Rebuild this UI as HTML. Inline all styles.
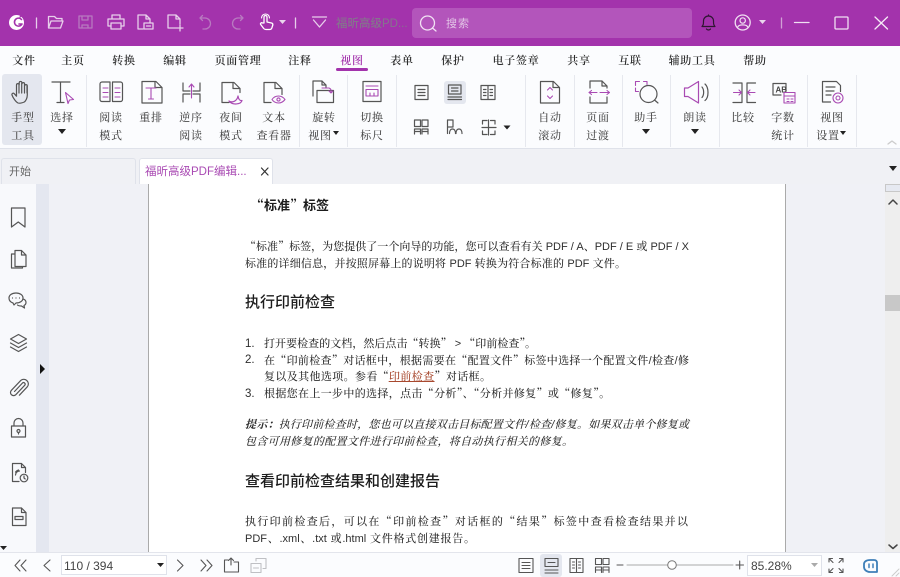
<!DOCTYPE html>
<html lang="zh"><head><meta charset="utf-8"><title>福昕高级PDF编辑器</title>
<style>
html,body{margin:0;padding:0;width:900px;height:577px;overflow:hidden;background:#fbfcfe}
body{position:relative;font-family:"Liberation Sans","Noto Sans CJK SC",sans-serif}
div{position:absolute}
.m,.r{font-family:"Liberation Serif","Noto Serif CJK SC",serif;white-space:nowrap;text-align:center;width:80px;margin-left:-40px;line-height:16px}
.m{top:53px;font-size:11px;letter-spacing:.7px;color:#2c2c2c;font-weight:600}
.r{font-size:11px;letter-spacing:.7px;color:#4a4a4a;font-weight:500}
.d{left:245px;font-family:"Liberation Sans","Noto Serif CJK SC",serif;font-size:11px;line-height:16px;color:#2e2e2e;white-space:nowrap;text-align:justify;text-align-last:justify;font-weight:500}
.d span.q,.h span.q{font-family:"Noto Serif CJK SC",serif}
.h{left:245px;font-family:"Liberation Sans","Noto Sans CJK SC",sans-serif;font-weight:500;font-size:15px;line-height:20px;color:#1c1c1c;white-space:nowrap}
.n{left:245px;font-size:11.5px;line-height:16px;color:#2e2e2e}
.i{font-style:italic}
svg{position:absolute;left:0;top:0}
</style></head><body>
<div style="left:0;top:0;width:900px;height:46px;background:#a333ac"></div>
<div style="left:412px;top:8px;width:280px;height:30px;background:#b355bb;border-radius:4px"></div>
<div style="left:336px;top:16px;font-size:11.5px;line-height:16px;color:#85748d;white-space:nowrap;font-weight:500">福昕高级PD...</div>
<div style="left:446px;top:16px;font-size:11px;line-height:16px;color:#e2c4e6;white-space:nowrap;letter-spacing:1px">搜索</div>

<div style="left:0;top:148px;width:900px;height:36px;background:#f0f1f5;border-top:1px solid #dfe2ea;box-sizing:border-box"></div>
<div style="left:2px;top:74px;width:40px;height:71px;background:#e4e7ef;border-radius:3px"></div>
<div style="left:444px;top:81px;width:22px;height:23px;background:#e4e7ef;border-radius:3px"></div>
<div style="left:336px;top:68px;width:32px;height:3px;background:#a333ac;border-radius:2px"></div>
<div style="left:86px;top:75px;width:1px;height:72px;background:#e6e8ee"></div>
<div style="left:299px;top:75px;width:1px;height:72px;background:#e6e8ee"></div>
<div style="left:347px;top:75px;width:1px;height:72px;background:#e6e8ee"></div>
<div style="left:396px;top:75px;width:1px;height:72px;background:#e6e8ee"></div>
<div style="left:525px;top:75px;width:1px;height:72px;background:#e6e8ee"></div>
<div style="left:574px;top:75px;width:1px;height:72px;background:#e6e8ee"></div>
<div style="left:622px;top:75px;width:1px;height:72px;background:#e6e8ee"></div>
<div style="left:670px;top:75px;width:1px;height:72px;background:#e6e8ee"></div>
<div style="left:719px;top:75px;width:1px;height:72px;background:#e6e8ee"></div>
<div style="left:807px;top:75px;width:1px;height:72px;background:#e6e8ee"></div>
<div style="left:856px;top:75px;width:1px;height:72px;background:#e6e8ee"></div>

<div class="m" style="left:24px">文件</div><div class="m" style="left:73px">主页</div><div class="m" style="left:124px">转换</div><div class="m" style="left:175px">编辑</div><div class="m" style="left:238px">页面管理</div><div class="m" style="left:300px">注释</div><div class="m" style="left:352px;color:#a333ac">视图</div><div class="m" style="left:402px">表单</div><div class="m" style="left:453px">保护</div><div class="m" style="left:516px">电子签章</div><div class="m" style="left:579px">共享</div><div class="m" style="left:630px">互联</div><div class="m" style="left:692px">辅助工具</div><div class="m" style="left:755px">帮助</div>

<div class="r" style="left:23px;top:110px">手型</div><div class="r" style="left:23px;top:128px">工具</div>
<div class="r" style="left:62px;top:110px">选择</div>
<div class="r" style="left:111px;top:110px">阅读</div><div class="r" style="left:111px;top:128px">模式</div>
<div class="r" style="left:151px;top:110px">重排</div>
<div class="r" style="left:191px;top:110px">逆序</div><div class="r" style="left:191px;top:128px">阅读</div>
<div class="r" style="left:231px;top:110px">夜间</div><div class="r" style="left:231px;top:128px">模式</div>
<div class="r" style="left:274px;top:110px">文本</div><div class="r" style="left:274px;top:128px">查看器</div>
<div class="r" style="left:324px;top:110px">旋转</div><div class="r" style="left:320px;top:128px">视图</div>
<div class="r" style="left:372px;top:110px">切换</div><div class="r" style="left:372px;top:128px">标尺</div>
<div class="r" style="left:550px;top:110px">自动</div><div class="r" style="left:550px;top:128px">滚动</div>
<div class="r" style="left:598px;top:110px">页面</div><div class="r" style="left:598px;top:128px">过渡</div>
<div class="r" style="left:646px;top:110px">助手</div>
<div class="r" style="left:695px;top:110px">朗读</div>
<div class="r" style="left:743px;top:110px">比较</div>
<div class="r" style="left:783px;top:110px">字数</div><div class="r" style="left:783px;top:128px">统计</div>
<div class="r" style="left:832px;top:110px">视图</div><div class="r" style="left:828px;top:128px">设置</div>

<!-- tabs -->
<div style="left:1px;top:158px;width:135px;height:26px;background:#f0f1f5;border:1px solid #dfe2ea;border-bottom:0;box-sizing:border-box;border-radius:3px 3px 0 0"></div>
<div style="left:139px;top:158px;width:134px;height:27px;background:#fff;border:1px solid #dfe2ea;border-bottom:0;box-sizing:border-box;border-radius:3px 3px 0 0"></div>
<div style="left:9px;top:164px;font-size:11px;line-height:16px;color:#666;white-space:nowrap">开始</div>
<div style="left:145px;top:164px;font-size:11.5px;line-height:16px;color:#a94ab3;white-space:nowrap">福昕高级PDF编辑...</div>

<!-- main area -->
<div style="left:0;top:184px;width:36px;height:368px;background:#f8f9fc"></div>
<div style="left:36px;top:184px;width:13px;height:368px;background:#e4e7f0"></div>
<div style="left:49px;top:184px;width:836px;height:368px;background:#f0f1f6"></div>
<div style="left:148px;top:184px;width:638px;height:368px;background:#fff;border-left:1px solid #aaa;border-right:1px solid #aaa;box-sizing:border-box"></div>
<div style="left:885px;top:184px;width:15px;height:368px;background:#eeeeee"></div>
<div style="left:885px;top:184px;width:15px;height:8px;background:#e6e9f1;border:1px solid #c8c8c8;border-right:0;box-sizing:border-box"></div>
<div style="left:885px;top:295px;width:15px;height:16px;background:#c8c8c8"></div>

<!-- document -->
<div class="h" style="left:251px;top:195px;font-size:13px;font-weight:700"><span class="q">“</span>标准<span class="q">”</span>标签</div>
<div class="d" style="top:238px;width:444px"><span class="q">“</span>标准<span class="q">”</span>标签，为您提供了一个向导的功能，您可以查看有关 PDF / A、PDF / E 或 PDF / X</div>
<div class="d" style="top:256px;width:381px">标准的详细信息，并按照屏幕上的说明将 PDF 转换为符合标准的 PDF 文件。</div>
<div class="h" style="top:293px">执行印前检查</div>
<div class="n" style="top:336px">1.</div><div class="d" style="left:264px;top:335px;width:272px">打开要检查的文档，然后点击<span class="q">“</span>转换<span class="q">”</span> &gt; <span class="q">“</span>印前检查<span class="q">”</span>。</div>
<div class="n" style="top:352px">2.</div><div class="d" style="left:264px;top:352px;width:425px">在<span class="q">“</span>印前检查<span class="q">”</span>对话框中，根据需要在<span class="q">“</span>配置文件<span class="q">”</span>标签中选择一个配置文件/检查/修</div>
<div class="d" style="left:264px;top:368px;width:227px">复以及其他选项。参看<span class="q">“</span><span style="color:#a8492f;text-decoration:underline">印前检查</span><span class="q">”</span>对话框。</div>
<div class="n" style="top:386px">3.</div><div class="d" style="left:264px;top:385px;width:346px">根据您在上一步中的选择，点击<span class="q">“</span>分析<span class="q">”</span>、<span class="q">“</span>分析并修复<span class="q">”</span>或<span class="q">“</span>修复<span class="q">”</span>。</div>
<div class="d i" style="top:417px;width:444px"><b>提示：</b>执行印前检查时，您也可以直接双击目标配置文件/检查/修复。如果双击单个修复或</div>
<div class="d i" style="top:434px;width:328px">包含可用修复的配置文件进行印前检查，将自动执行相关的修复。</div>
<div class="h" style="top:472px">查看印前检查结果和创建报告</div>
<div class="d" style="top:513px;width:443px">执行印前检查后，可以在<span class="q">“</span>印前检查<span class="q">”</span>对话框的<span class="q">“</span>结果<span class="q">”</span>标签中查看检查结果并以</div>
<div class="d" style="top:531px;width:230px">PDF、.xml、.txt 或.html 文件格式创建报告。</div>

<!-- bottom -->
<div style="left:0;top:552px;width:900px;height:25px;background:#fbfcfe;border-top:1px solid #e3e5ec;box-sizing:border-box"></div>
<div style="left:61px;top:555px;width:106px;height:20px;background:#fff;border:1px solid #dfe2ea;box-sizing:border-box"></div>
<div style="left:64px;top:557.500px;font-size:12px;line-height:16px;color:#444;white-space:nowrap">110 / 394</div>
<div style="left:540px;top:554px;width:22px;height:23px;background:#e4e7ef;border-radius:3px"></div>
<div style="left:747px;top:555px;width:75px;height:21px;background:#fff;border:1px solid #dfe2ea;box-sizing:border-box"></div>
<div style="left:751px;top:557.500px;font-size:12px;line-height:16px;color:#444;white-space:nowrap">85.28%</div>

<svg width="900" height="577" viewBox="0 0 900 577" fill="none" stroke-linecap="round" stroke-linejoin="round">
<!-- title bar -->
<circle cx="16.500" cy="22.500" r="7.500" fill="#fff"/><path d="M21.500 19.500a4 4 0 1 0 .5 4.500h-3" stroke="#a333ac" stroke-width="1.600"/><path d="M24 14l-4 3" stroke="#a333ac" stroke-width="1.200"/>
<g stroke="#e7cfea" stroke-width="1.300">
<path d="M36.500 18v10"/><path d="M48.500 28V16.500h6l2 2h5.500V21M48.500 28l2.500-7h12l-2.500 7z"/>
<path d="M112 19v-4h8v4M111 26h-3v-7h16v7h-3M111 23h10v6h-10z"/>
<path d="M143 29h-5V15h8l4 4v4M146 15v4h4M144 23h9v6h-9zM146.500 26h4"/>
<path d="M178 28h-10V15h8l4 4v5M176 15v4h4M180 25v6M177 28h6"/>
<path d="M312.500 17h14M313.500 20l6 7 6-7"/>
<path d="M295.500 18v10"/>
</g>
<g stroke="#b87ac0" stroke-width="1.300">
<rect x="79" y="16" width="13" height="12"/><path d="M82 16v4h6v-4M82 28v-3h6v3"/>
<path d="M203 29h2a5.500 5.500 0 0 0 0-11h-5M200 18l2.500-2.500M200 18l2.500 2.500"/>
<path d="M240 29h-2a5.500 5.500 0 0 1 0-11h5M243 18l-2.500-2.500M243 18l-2.500 2.500"/>
</g>
<path d="M264 23v-6a1.500 1.500 0 0 1 3 0v5l4.500 1c1 .3 1.500 1 1.300 2l-.8 2.500a2.500 2.500 0 0 1-2.500 2h-3.500a3 3 0 0 1-2.300-1l-3-4c-.7-1 .6-2.300 1.700-1.500z" stroke="#fff" stroke-width="1.300"/><path d="M261.500 18a4 4 0 0 1 8 0" stroke="#fff" stroke-width="1.100"/>
<path d="M279 20h7l-3.500 4zM759 20h7l-3.500 4z" fill="#ead5ed"/>
<circle cx="427.500" cy="23" r="7" stroke="#f2e3f4" stroke-width="1.300"/><path d="M432.500 28l3.500 3" stroke="#f2e3f4" stroke-width="1.300"/>
<path d="M702 26.500c1.500-1.500 1.500-3 1.500-5.500a5 5 0 0 1 10 0c0 2.500 0 4 1.500 5.500zM706.500 29a2.500 2.500 0 0 0 4 0M708.500 15v1" stroke="#2e1531" stroke-width="1.200"/>
<circle cx="742.700" cy="22.500" r="7.500" stroke="#f0e0f2" stroke-width="1.300"/><circle cx="742.700" cy="20.500" r="2.700" stroke="#f0e0f2" stroke-width="1.200"/><path d="M737.500 27.500c1-3.500 9.500-3.500 10.500 0" stroke="#f0e0f2" stroke-width="1.200"/>
<path d="M781.500 18v10" stroke="#d0a0d5" stroke-width="1.300"/><path d="M794.500 22.500h14.500" stroke="#f0e0f2" stroke-width="1.300"/>
<rect x="835" y="17" width="13" height="12" rx="1" stroke="#f0e0f2" stroke-width="1.300"/>
<path d="M875 17l12.500 12M887.500 17l-12.500 12" stroke="#f6ecf7" stroke-width="1.300"/>

<!-- ribbon gray -->
<g stroke="#555" stroke-width="1.200">
<path d="M18 103c-2-1-5-5-6-8-.5-1.500 1.300-2.500 2.300-1.300l2.200 2.500V85a1.300 1.300 0 0 1 2.700 0v-2.200a1.300 1.300 0 0 1 2.700 0V84a1.300 1.300 0 0 1 2.700 0v2a1.300 1.300 0 0 1 2.700 0v9c0 3-1.500 6-3 7-2 1-5 1.500-6.300 1zM19 85v8M21.700 83v10M24.500 84v9M27 86v7"/>
<path d="M52 82h18M60.500 82v20.500M57 102.500h7"/>
<path d="M100 84a2 2 0 0 1 2-2h8v19.500h-8a2 2 0 0 1-2-2zM122.500 84a2 2 0 0 0-2-2h-8v19.500h8a2 2 0 0 0 2-2z"/>
<path d="M142 81.500h14l6 6v15.500h-20zM155 81.500v6h7"/>
<path d="M183 83v8h7M200 83v8h-7M183 102v-8h7M200 102v-8h-7"/>
<path d="M222 102.500v-20h12l6 6v4M233 82.500v6h7M222 102.500h7"/>
<path d="M264 102.500v-20h12l6 6v6M275 82.500v6h7M264 102.500h7"/>
<path d="M313 96v-15h9l4 4v3M322 81v4h4M317 90.500h16.500v12H317z"/>
<rect x="363" y="81.500" width="18" height="20"/>
<path d="M415 85.500h13v14h-13zM418 89.500h7M418 92.500h7M418 95.500h7"/>
<path d="M448.500 85h12.500v9h-12.500zM451.500 88h6.500M451.500 91h6.500M448 97h13.500M448 99.500h13.500"/>
<path d="M481 85.500h14v14h-14zM488 85.500v14M483.500 89.500h2.500M483.500 92.500h2.500M483.500 95.500h2.500M490 89.500h2.500M490 92.500h2.500M490 95.500h2.500"/>
<path d="M414.500 120h6v6.500h-6zM422 120h6v6.500h-6zM414.500 129h6v5M422 129h6v5M414.500 129v5M422 129v5M414.500 131.500h6M422 131.500h6"/>
<path d="M447.500 133.500V120h5.500v7h-5.500M449.500 133.500c0-2.500 1-4.500 3-4.500s3 2 3 4.500M456 133.500c0-2.500 1-4.500 3-4.500s3 2 3 4.500"/>
<path d="M482.500 124v-3.500h4.500M490.500 120.500h4.500v3.500M482.500 131v3.500h4.500M490.500 134.500h4.500V131M482 127.500h14M488.500 120v15"/>
<path d="M540.500 103V81.500h13l6 6V103zM553 81.500v6h6.500"/>
<path d="M590 88v-7h12l5 5v2M602 81v5h5M590 97v6h17v-6"/>
<circle cx="648.500" cy="94" r="8.500"/><path d="M654.500 100l3.500 3"/>
<path d="M702 87c2.200 2.500 2.200 8 0 10.500M705 84c4 3.500 4 13.500 0 16.500"/>
<path d="M733 83h9v19.500h-9M755.500 83h-8.500v19.500h8.500"/>
<path d="M773 95V83.500h13v7M773 95h8"/>
<path d="M822.500 102V81.500h14l4 4v6M822.500 102h8M826 87h9M826 91h8M826 95h5"/>
</g>
<text x="775.500" y="92.500" fill="#444" font-size="8" font-family="Liberation Sans" font-weight="700">AB</text>
<g fill="#222"><path d="M58 129h8l-4 5zM333 131h6l-3 4zM503.500 125.500h7l-3.500 4zM642 129h8l-4 5zM691 129h8l-4 5zM840 131h6l-3 4z"/></g>
<g stroke="#a94ab3" stroke-width="1.100">
<path d="M65.500 92.500l8 7-4 .5-1.500 3.500z"/><path d="M103 88h5M103 92.500h5M103 97h5M115 88h5M115 92.500h5M115 97h5"/>
<path d="M146 88h10M151 88v11M148.500 99h5"/>
<path d="M191.500 98V84M189 87l2.500-3 2.500 3"/>
<path d="M229 101c3 2 8 .5 9-5 .5 3.500 2 5 4 4.500-1 4-9.500 5-13 .5z" stroke-width="1.200"/>
<path d="M272 99.500c2-3 4-3.500 6.500-3.500s5 1.500 6.500 3.500c-1.500 2-4 3.500-6.500 3.500s-4.500-.5-6.500-3.500z"/><circle cx="278.500" cy="99.500" r="1.600"/>
<path d="M322 88h7a3 3 0 0 1 2 2v3M329 91l2 2 2-2"/>
<path d="M366 86h12M366 89.500h12v6.500h-12zM370 93v3M374 93v3"/>
<path d="M547.500 90l2.500-2.500 2.500 2.500M547.500 96l2.500 2.500 2.500-2.500"/>
<path d="M589 92.500h8M589 92.500l2.500-2M589 92.500l2.500 2M600 92.500h9.500M609.500 92.500l-2.500-2M609.500 92.500l-2.500 2"/>
<path d="M635.500 85.500V81.500h4M643.500 81.500h3.500v3M635.500 88v3.500h3"/>
<path d="M684.500 88h3.500l10.500-6.500v21.500L688 96.500h-3.500z" stroke-width="1.200"/>
<path d="M733.500 92.500h8M741.500 92.500l-2.500-2.500M741.500 92.500l-2.500 2.500M755 92.500h-7.500M747.500 92.500l2.500-2.500M747.500 92.500l2.500 2.500"/>
<path d="M784 92.500h11v10.500h-11zM784 96h11M787 99h2M791 99h2M787 101.500h2M791 101.500h2"/>
<circle cx="838" cy="98" r="5"/><circle cx="838" cy="98" r="2"/>
</g>
<path d="M888 144l4-3 4 3" stroke="#ccc" stroke-width="1.300"/>

<!-- tabs -->
<path d="M261.500 168l6.500 7M268 168l-6.500 7" stroke="#333" stroke-width="1.200"/>
<path d="M889 166h8l-4 5z" fill="#222"/>

<!-- left panel -->
<g stroke="#555" stroke-width="1.200">
<path d="M11.500 208h13.500v19l-6.750-5-6.750 5z"/>
<path d="M15 250.500h6.500l4.500 4.500v11.500H15zM21.500 250.500v4.500h4.500M15 254h-3.500v14h11v-1.500"/>
<path d="M13 303c-3-1-4-3-4-5 0-3 3-5 7-5s7 2 7 5-3 5-7 5l-2 2zM23 299c2 .5 3 2 3 3.500 0 1.500-1 2.500-2 3l.5 2.500-3-2c-2 0-3 0-4-1M12.500 298h0M16 298h0M19.500 298h0"/>
<path d="M10.500 339l8-4.500 8 4.500-8 4.500zM10.500 343l8 4.500 8-4.500M10.500 347l8 4.500 8-4.500"/>
<path d="M14.500 391.500l8-8.500a1.600 1.600 0 0 1 2.300 2.200l-9 9.500a3.100 3.100 0 0 1-4.400-4.400l9.500-10a4.600 4.600 0 0 1 6.500 6.400l-8 8.500"/>
<path d="M11.500 426h14v11h-14zM14 426v-3a4.500 4.500 0 0 1 9 0v3"/><circle cx="18.500" cy="431" r="1.500"/><path d="M18.500 432.500v1.500"/>
<path d="M12.500 463.500h9l4 4v5M12.500 463.500v18h6.500M21.500 463.500v4h4"/><circle cx="24" cy="478" r="3.800"/><path d="M24 476v2l1.200 1M15.500 475a4 4 0 0 1 4-4M15.500 472a7 7 0 0 1 3-2"/>
<path d="M12.500 508h9l4.500 4.500v13H12.500zM21.500 508v4.500H26M15 516.500h8v3h-8z"/>
</g>
<path d="M40 364l5 5-5 5z" fill="#111"/><path d="M0 546h7l-3.500 4z" fill="#222"/>
<path d="M889 204l4-4 4 4" stroke="#444" stroke-width="1.500"/>
<path d="M889 545l4 3.500 4-3.500" stroke="#444" stroke-width="1.500"/>

<!-- bottom bar -->
<g stroke="#555" stroke-width="1.100">
<path d="M20 560l-5 5.500 5 5.500M26 560l-5 5.500 5 5.500"/>
<path d="M50 560l-6 5.500 6 5.500"/>
<path d="M177.500 560l5.500 5.500-5.500 5.500"/>
<path d="M201 560l5 5.500-5 5.500M207 560l5 5.500-5 5.500"/>
<path d="M228 560h-3.500v12h14v-10h-4.500M231 565v-7M228.500 560.500l2.500-2.500 2.500 2.500"/>
<path d="M519 558.500h14v14h-14zM522 562.500h8M522 565.500h8M522 568.500h8"/>
<path d="M545 558.500h13v8h-13zM548 562.500h7M545 570h13M545 573h13"/>
<path d="M570 558.500h13v14h-13zM576.500 558.500v14M572.500 562h2M572.500 565h2M572.500 568h2M578.500 562h2M578.500 565h2M578.500 568h2"/>
<path d="M595.500 558.500h6v6h-6zM603 558.500h6v6h-6zM595.500 567h6v5.500M603 567h6v5.500M595.500 567v5.500M603 567v5.500M595.500 570h6M603 570h6"/>
<path d="M617 565h6M736 565h7.500M739.700 561v8"/>
<path d="M829 562v-3.500h3.500M843 562v-3.500h-3.500M829 569v3.500h3.500M843 569v3.500h-3.500M830 559.500l3 3M842 559.500l-3 3M830 571.500l3-3M842 571.500l-3-3"/>
</g>
<path d="M256 561v-2.500h10v10h-3M251 563.500h10v9h-10zM253.500 568h5" stroke="#bfc0c4" stroke-width="1.100"/>
<path d="M627 565h106" stroke="#aaa" stroke-width="1"/><circle cx="672" cy="565" r="4.300" fill="#fff" stroke="#777" stroke-width="1"/>
<path d="M157 563h7l-3.500 4z" fill="#222"/><path d="M811 563h7l-3.500 4z" fill="#aaa"/>
<path d="M870 560h4c2 0 3 1 3 3v9h-7c-3 0-6-2-6-5v-3c0-2 2-4 6-4z" stroke="#3e7fb8" stroke-width="1.800"/><path d="M869 564v3.500M873 564v3.500" stroke="#3e7fb8" stroke-width="1.500"/>
<path d="M892 576l7-7M896 576l3-3" stroke="#ccc" stroke-width="1"/>
</svg>
</body></html>
